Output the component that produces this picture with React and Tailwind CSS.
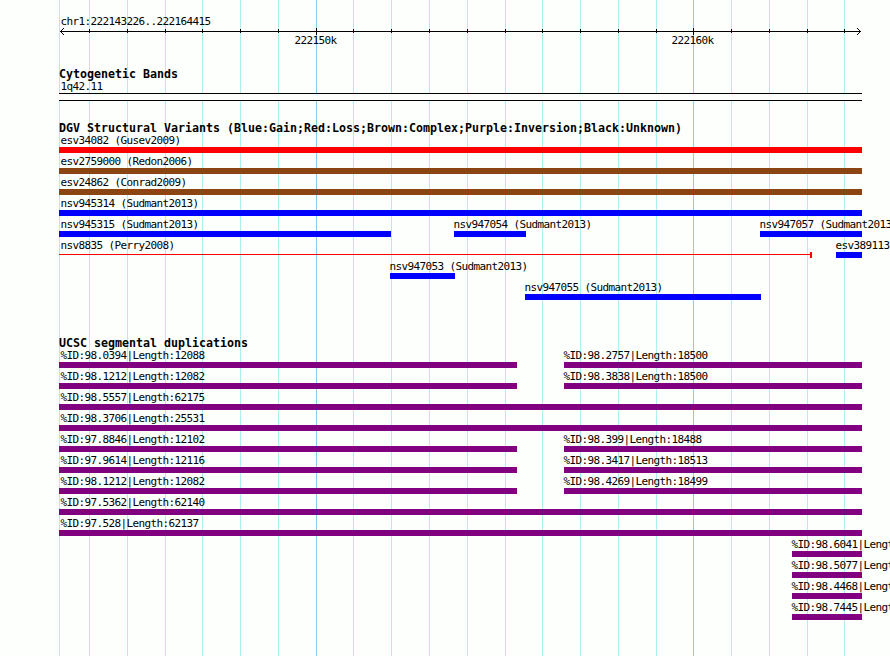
// App.jsx
const VIEW_START = 59;
const VIEW_END = 862;

// x position of each grid line, every 1kb
const GRID = [
  59, 89, 127, 165, 202, 240, 278, 316, 353, 391, 429, 467, 505, 542, 580, 618,
  656, 693, 731, 769, 807, 844,
];
const MAJOR = [316, 693];

const COLORS = {
  loss: "bg-[#ff0000]",
  complex: "bg-[#8b4513]",
  gain: "bg-[#0000ff]",
  dup: "bg-[#800080]",
};

const variants = [
  [{ label: "esv34082 (Gusev2009)", start: 59, end: 862, type: "loss" }],
  [{ label: "esv2759000 (Redon2006)", start: 59, end: 862, type: "complex" }],
  [{ label: "esv24862 (Conrad2009)", start: 59, end: 862, type: "complex" }],
  [{ label: "nsv945314 (Sudmant2013)", start: 59, end: 862, type: "gain" }],
  [
    { label: "nsv945315 (Sudmant2013)", start: 59, end: 391, type: "gain" },
    { label: "nsv947054 (Sudmant2013)", start: 454, end: 526, type: "gain" },
    { label: "nsv947057 (Sudmant2013", start: 760, end: 862, type: "gain" },
  ],
  [
    { label: "nsv8835 (Perry2008)", start: 59, end: 812, type: "span" },
    { label: "esv389113", start: 836, end: 862, type: "gain" },
  ],
  [{ label: "nsv947053 (Sudmant2013)", start: 390, end: 455, type: "gain" }],
  [{ label: "nsv947055 (Sudmant2013)", start: 525, end: 761, type: "gain" }],
];

const dup = (label, start, end) => ({ label, start, end, type: "dup" });

const duplications = [
  [
    dup("%ID:98.0394|Length:12088", 59, 517),
    dup("%ID:98.2757|Length:18500", 564, 862),
  ],
  [
    dup("%ID:98.1212|Length:12082", 59, 517),
    dup("%ID:98.3838|Length:18500", 564, 862),
  ],
  [dup("%ID:98.5557|Length:62175", 59, 862)],
  [dup("%ID:98.3706|Length:25531", 59, 862)],
  [
    dup("%ID:97.8846|Length:12102", 59, 517),
    dup("%ID:98.399|Length:18488", 564, 862),
  ],
  [
    dup("%ID:97.9614|Length:12116", 59, 517),
    dup("%ID:98.3417|Length:18513", 564, 862),
  ],
  [
    dup("%ID:98.1212|Length:12082", 59, 517),
    dup("%ID:98.4269|Length:18499", 564, 862),
  ],
  [dup("%ID:97.5362|Length:62140", 59, 862)],
  [dup("%ID:97.528|Length:62137", 59, 862)],
  [dup("%ID:98.6041|Lengt", 792, 862)],
  [dup("%ID:98.5077|Lengt", 792, 862)],
  [dup("%ID:98.4468|Lengt", 792, 862)],
  [dup("%ID:98.7445|Lengt", 792, 862)],
];

function GridLines() {
  return (
    <div className="absolute inset-0">
      {GRID.map((x) => (
        <div
          key={x}
          className={`absolute inset-y-0 w-px ${
            MAJOR.includes(x) ? "bg-[#87ceeb]" : "bg-[#afeeee]"
          }`}
          style={{ left: x }}
        />
      ))}
    </div>
  );
}

function Title({ children }) {
  return (
    <h2 className="h-3 text-[11.63px] leading-3 font-bold tracking-[0px] whitespace-pre">
      {children}
    </h2>
  );
}

function Ruler() {
  return (
    <svg
      className="block h-[7px] w-[803px]"
      viewBox="59 28 803 7"
      shapeRendering="crispEdges"
    >
      <rect x="60" y="31" width="801" height="1" />
      {GRID.slice(1).map((x) =>
        MAJOR.includes(x) ? (
          <rect key={x} x={x} y="28" width="1" height="7" />
        ) : (
          <rect key={x} x={x} y="29" width="1" height="4" />
        )
      )}
      {/* arrow heads */}
      {[1, 2, 3].map((d) => (
        <g key={d}>
          <rect x={60 + d} y={31 - d} width="1" height="1" />
          <rect x={60 + d} y={31 + d} width="1" height="1" />
          <rect x={860 - d} y={31 - d} width="1" height="1" />
          <rect x={860 - d} y={31 + d} width="1" height="1" />
        </g>
      ))}
    </svg>
  );
}

function Feature({ feature, prevEnd }) {
  const { label, start, end, type } = feature;
  return (
    <div
      className="shrink-0"
      style={{ width: end - start, marginLeft: start - prevEnd }}
    >
      <div
        className={`h-[15px] pt-px leading-[15px] whitespace-pre ${
          start === VIEW_START ? "pl-[1.5px]" : "-ml-[0.5px]"
        }`}
      >
        {label}
      </div>
      {type === "span" ? (
        <div className="flex h-1.5 items-start">
          <div className="mt-0.5 h-px grow bg-[#ff0000]" />
          <div className="h-1.5 w-0.5 bg-[#ff0000]" />
        </div>
      ) : (
        <div className={`h-1.5 ${COLORS[type]}`} />
      )}
    </div>
  );
}

function Track({ title, rows }) {
  return (
    <section>
      <Title>{title}</Title>
      <div className="-mt-0.5">
        {rows.map((row, i) => (
          <div key={i} className="flex h-[21px]">
            {row.map((feature, j) => (
              <Feature
                key={feature.label}
                feature={feature}
                prevEnd={j === 0 ? VIEW_START : row[j - 1].end}
              />
            ))}
          </div>
        ))}
      </div>
    </section>
  );
}

export default function App() {
  return (
    <div className="relative h-[656px] w-[890px] overflow-hidden bg-[#fdfffc] font-['DejaVu_Sans_Mono',monospace] text-[11px] tracking-[-0.622px] text-black">
      <GridLines />
      <main
        className="relative flex flex-col pl-[59px]"
        style={{ width: VIEW_END }}
      >
        <header className="pt-[15px]">
          <div className="h-[13px] pl-[1.5px] leading-[14px]">
            chr1:222143226..222164415
          </div>
          <Ruler />
          <div className="flex h-3 leading-3">
            <span className="ml-[235.5px] w-[42px]">222150k</span>
            <span className="ml-[335px] w-[42px]">222160k</span>
          </div>
        </header>

        <section className="mt-[21px]">
          <Title>Cytogenetic Bands</Title>
          <div className="h-[13px] pl-[1.5px] leading-[13px]">1q42.11</div>
          <div className="h-2 border-y border-black bg-[#fdfffc]" />
        </section>

        <div className="mt-[21px]">
          <Track
            title="DGV Structural Variants (Blue:Gain;Red:Loss;Brown:Complex;Purple:Inversion;Black:Unknown)"
            rows={variants}
          />
        </div>

        <div className="mt-[37px]">
          <Track title="UCSC segmental duplications" rows={duplications} />
        </div>
      </main>
    </div>
  );
}
